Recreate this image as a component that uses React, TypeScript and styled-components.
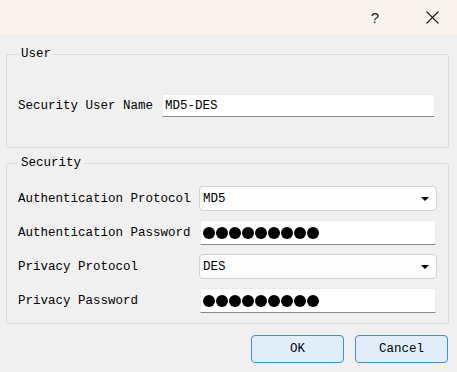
import React from "react";
import styled, { createGlobalStyle } from "styled-components";

const Global = createGlobalStyle`
  html, body { margin: 0; padding: 0; background: #f0f0f0; }
  body { font-family: "Liberation Mono", "DejaVu Sans Mono", monospace; color: #000; }
  * { box-sizing: border-box; }
`;

const Window = styled.div`
  width: 457px;
  height: 372px;
  background: #f0f0f0;
  display: flex;
  flex-direction: column;
  overflow: hidden;
`;

const TitleBar = styled.div`
  height: 34px;
  flex-shrink: 0;
  background: #faf3ee;
  display: flex;
  align-items: center;
  justify-content: flex-end;
  gap: 33px;
  padding-right: 13px;
`;

const TitleButton = styled.div`
  width: 24px;
  height: 34px;
  display: flex;
  align-items: center;
  justify-content: center;
  font-family: "Liberation Sans", Arial, sans-serif;
  font-size: 15px;
  color: #1f1f1f;
`;

const Body = styled.div`
  display: flex;
  flex-direction: column;
  padding: 13px 8px 0 6px;
`;

const Group = styled.fieldset<{ $gapTop?: number }>`
  margin: ${(p) => p.$gapTop ?? 0}px 0 0 0;
  padding: 0;
  min-width: 0;
  border: 1px solid #dcdcdc;
  border-radius: 2px;
`;

const Legend = styled.legend`
  margin-left: 11px;
  padding: 0 3px;
  font-size: 12.5px;
  line-height: 14px;
  color: #000;
`;

const Rows = styled.div<{ $label: number; $pad: string }>`
  display: grid;
  grid-template-columns: ${(p) => p.$label}px 1fr;
  row-gap: 9px;
  align-items: center;
  padding: ${(p) => p.$pad};
`;

const Label = styled.div`
  font-size: 12.5px;
  white-space: nowrap;
  color: #000;
`;

const TextField = styled.div<{ $inset?: boolean }>`
  height: ${(p) => (p.$inset ? 25 : 23)}px;
  margin: 0 ${(p) => (p.$inset ? 1 : 0)}px;
  background: #fff;
  border: 1px solid #ececec;
  border-bottom-color: #8a8a8a;
  border-radius: 2px 2px 0 0;
  padding: 0 2px;
  display: flex;
  align-items: center;
  font-size: 12.5px;
`;

const Dots = styled.div`
  display: flex;
  gap: 1px;
`;

const Dot = styled.span`
  width: 12px;
  height: 12px;
  border-radius: 50%;
  background: #000;
`;

const Combo = styled.div`
  height: 25px;
  border: 1px solid #cdd3da;
  border-radius: 4px;
  background: #fdfdfd;
  display: flex;
  align-items: center;
  justify-content: space-between;
  padding: 0 7px 0 3px;
  font-size: 12.5px;
`;

const Footer = styled.div`
  display: flex;
  justify-content: flex-end;
  gap: 11px;
  margin-top: 11px;
  padding-right: 1px;
`;

const Button = styled.button`
  width: 93px;
  height: 28px;
  padding: 0;
  border: 1px solid #3f8fdc;
  border-radius: 4px;
  background: #e1eefa;
  font-family: "Liberation Mono", monospace;
  font-size: 12.5px;
  color: #000;
`;

const Arrow = () => (
  <svg width="8" height="4" viewBox="0 0 8 4">
    <path d="M0 0 H8 L4 4 Z" fill="#000" />
  </svg>
);

const Password = () => (
  <TextField $inset>
    <Dots>
      {Array.from({ length: 9 }).map((_, i) => (
        <Dot key={i} />
      ))}
    </Dots>
  </TextField>
);

export default function App() {
  return (
    <>
      <Global />
      <Window>
        <TitleBar>
          <TitleButton>?</TitleButton>
          <TitleButton>
            <svg width="13" height="13" viewBox="0 0 13 13">
              <path d="M0.5 0.5 L12.5 12.5 M12.5 0.5 L0.5 12.5" stroke="#1f1f1f" strokeWidth="1.1" />
            </svg>
          </TitleButton>
        </TitleBar>
        <Body>
          <Group>
            <Legend>User</Legend>
            <Rows $label={144} $pad="33px 13px 30px 11px">
              <Label>Security User Name</Label>
              <TextField>MD5-DES</TextField>
            </Rows>
          </Group>
          <Group $gapTop={8}>
            <Legend>Security</Legend>
            <Rows $label={181} $pad="16px 11px 10px 11px">
              <Label>Authentication Protocol</Label>
              <Combo>
                <span>MD5</span>
                <Arrow />
              </Combo>
              <Label>Authentication Password</Label>
              <Password />
              <Label>Privacy Protocol</Label>
              <Combo>
                <span>DES</span>
                <Arrow />
              </Combo>
              <Label>Privacy Password</Label>
              <Password />
            </Rows>
          </Group>
          <Footer>
            <Button>OK</Button>
            <Button>Cancel</Button>
          </Footer>
        </Body>
      </Window>
    </>
  );
}
